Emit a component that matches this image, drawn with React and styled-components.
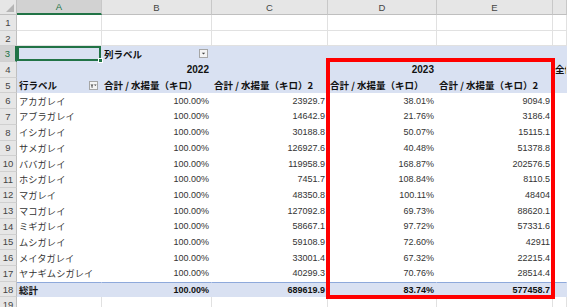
import React from "react";
import styled, { createGlobalStyle } from "styled-components";

const GlobalStyle = createGlobalStyle`
  html, body {
    margin: 0;
    padding: 0;
    background: #fff;
    overflow: hidden;
  }
`;

const GRID_LINE = "#e1e1e1";
const PIVOT_BLUE = "#d9e1f2";
const EXCEL_GREEN = "#217346";

const fish = [
  ["アカガレイ", "23929.7", "38.01%", "9094.9"],
  ["アブラガレイ", "14642.9", "21.76%", "3186.4"],
  ["イシガレイ", "30188.8", "50.07%", "15115.1"],
  ["サメガレイ", "126927.6", "40.48%", "51378.8"],
  ["ババガレイ", "119958.9", "168.87%", "202576.5"],
  ["ホシガレイ", "7451.7", "108.84%", "8110.5"],
  ["マガレイ", "48350.8", "100.11%", "48404"],
  ["マコガレイ", "127092.8", "69.73%", "88620.1"],
  ["ミギガレイ", "58667.1", "97.72%", "57331.6"],
  ["ムシガレイ", "59108.9", "72.60%", "42911"],
  ["メイタガレイ", "33001.4", "67.32%", "22215.4"],
  ["ヤナギムシガレイ", "40299.3", "70.76%", "28514.4"],
];

const Sheet = styled.div`
  position: relative;
  display: grid;
  grid-template-columns: 17px 85px 110px 116px 109px 116px 1fr;
  grid-template-rows: 15px;
  grid-auto-rows: 15.7px;
  width: 567px;
  height: 307px;
  overflow: hidden;
  font-family: "Liberation Sans", "Noto Sans CJK JP", sans-serif;
  font-size: 9px;
  color: #333;
`;

const Corner = styled.div`
  position: relative;
  background: #e6e6e6;
  border-right: 1px solid #bfbfbf;
  border-bottom: 1px solid #bfbfbf;
  box-sizing: border-box;
`;

const CornerMark = styled.svg`
  position: absolute;
  right: 2px;
  bottom: 2px;
`;

const ColHead = styled.div`
  display: flex;
  align-items: center;
  justify-content: center;
  box-sizing: border-box;
  background: ${(p) => (p.$active ? "#d2d2d2" : "#e6e6e6")};
  color: ${(p) => (p.$active ? EXCEL_GREEN : "#444")};
  border-right: 1px solid #c8c8c8;
  border-bottom: ${(p) => (p.$active ? `2px solid ${EXCEL_GREEN}` : "1px solid #bfbfbf")};
  font-size: 9.5px;
`;

const RowHead = styled.div`
  display: flex;
  align-items: center;
  justify-content: center;
  box-sizing: border-box;
  background: ${(p) => (p.$active ? "#d2d2d2" : "#e6e6e6")};
  color: ${(p) => (p.$active ? EXCEL_GREEN : "#444")};
  border-right: ${(p) => (p.$active ? `2px solid ${EXCEL_GREEN}` : "1px solid #bfbfbf")};
  border-bottom: 1px solid #d0d0d0;
  font-size: 9.5px;
`;

const tones = {
  plain: { bg: "#fff", grid: GRID_LINE },
  head: { bg: PIVOT_BLUE, grid: "transparent" },
  body: { bg: "#fff", grid: "transparent" },
  total: { bg: PIVOT_BLUE, grid: "transparent" },
};

const Cell = styled.div`
  position: relative;
  display: flex;
  align-items: center;
  justify-content: ${(p) => (p.$align === "right" ? "flex-end" : "flex-start")};
  box-sizing: border-box;
  min-width: 0;
  padding: 0 2px;
  white-space: nowrap;
  font-size: ${(p) => (p.$year ? "10px" : "9px")};
  font-weight: ${(p) => (p.$bold ? 700 : 400)};
  color: ${(p) => (p.$bold ? "#111" : "#333")};
  background: ${(p) => tones[p.$tone].bg};
  border-right: 1px solid ${(p) => tones[p.$tone].grid};
  border-bottom: 1px solid ${(p) => tones[p.$tone].grid};
  border-top: ${(p) => (p.$tone === "total" ? "1px solid #8ea9db" : "none")};
  box-shadow: ${(p) => (p.$selected ? `inset 0 0 0 2px ${EXCEL_GREEN}` : "none")};
  overflow: ${(p) => (p.$selected ? "visible" : "hidden")};

  ${(p) =>
    p.$selected &&
    `
    &::after {
      content: "";
      position: absolute;
      right: -2px;
      bottom: -2px;
      width: 5px;
      height: 5px;
      background: ${EXCEL_GREEN};
      border: 1px solid #fff;
      box-sizing: border-box;
      z-index: 2;
    }
  `}
`;

const Jp = styled.span`
  font-family: "Noto Sans CJK JP", sans-serif;
  font-size: ${(p) => (p.$small ? "9.2px" : "9.5px")};
  letter-spacing: ${(p) => (p.$small ? "0.1px" : "0")};
  color: ${(p) => (p.$bold ? "#111" : "#333")};
  font-weight: ${(p) => (p.$bold ? 700 : 400)};
`;

const FilterBox = styled.span`
  display: flex;
  align-items: center;
  justify-content: center;
  width: 9px;
  height: 9px;
  margin-left: auto;
  margin-right: 1px;
  box-sizing: border-box;
  background: #f4f4f4;
  border: 1px solid #a6a6a6;
  flex-shrink: 0;
`;

const Highlight = styled.div`
  position: absolute;
  left: 326px;
  top: 58px;
  width: 229px;
  height: 241px;
  box-sizing: border-box;
  border: 4px solid #ff0000;
  pointer-events: none;
`;

function FilterButton({ funnel }) {
  return (
    <FilterBox>
      <svg width="7" height="7" viewBox="0 0 7 7">
        {funnel ? (
          <>
            <path d="M0.5 2.5h3l-1 1.3v2.2l-1-0.6v-1.6z" fill="#444" />
            <path d="M4 2.5h2.6l-1.3 1.6z" fill="#444" />
          </>
        ) : (
          <path d="M1.8 2.8h3.4l-1.7 1.8z" fill="#444" />
        )}
      </svg>
    </FilterBox>
  );
}

function PlainRow({ n }) {
  return (
    <>
      <RowHead>{n}</RowHead>
      {[0, 1, 2, 3, 4, 5].map((i) => (
        <Cell key={i} $tone="plain" />
      ))}
    </>
  );
}

const SUM = "合計 / 水揚量（キロ）";

export default function App() {
  return (
    <>
      <GlobalStyle />
      <Sheet>
        <Corner>
          <CornerMark width="8" height="8" viewBox="0 0 8 8">
            <path d="M8 0V8H0z" fill="#b5b5b5" />
          </CornerMark>
        </Corner>
        <ColHead $active>A</ColHead>
        <ColHead>B</ColHead>
        <ColHead>C</ColHead>
        <ColHead>D</ColHead>
        <ColHead>E</ColHead>
        <ColHead />

        <PlainRow n={1} />
        <PlainRow n={2} />

        {/* pivot header */}
        <RowHead $active>3</RowHead>
        <Cell $tone="head" $selected />
        <Cell $tone="head">
          <Jp $bold>列ラベル</Jp>
          <FilterButton />
        </Cell>
        <Cell $tone="head" />
        <Cell $tone="head" />
        <Cell $tone="head" />
        <Cell $tone="head" />

        <RowHead>4</RowHead>
        <Cell $tone="head" />
        <Cell $tone="head" $align="right" $bold $year>2022</Cell>
        <Cell $tone="head" />
        <Cell $tone="head" $align="right" $bold $year>2023</Cell>
        <Cell $tone="head" />
        <Cell $tone="head">
          <Jp $bold>全体の {SUM}</Jp>
        </Cell>

        <RowHead>5</RowHead>
        <Cell $tone="head">
          <Jp $bold>行ラベル</Jp>
          <FilterButton funnel />
        </Cell>
        <Cell $tone="head">
          <Jp $bold>{SUM}</Jp>
        </Cell>
        <Cell $tone="head">
          <Jp $bold>{SUM}2</Jp>
        </Cell>
        <Cell $tone="head">
          <Jp $bold>{SUM}</Jp>
        </Cell>
        <Cell $tone="head">
          <Jp $bold>{SUM}2</Jp>
        </Cell>
        <Cell $tone="head" />

        {fish.map(([name, kg22, ratio, kg23], i) => (
          <React.Fragment key={name}>
            <RowHead>{i + 6}</RowHead>
            <Cell $tone="body">
              <Jp $small>{name}</Jp>
            </Cell>
            <Cell $tone="body" $align="right">100.00%</Cell>
            <Cell $tone="body" $align="right">{kg22}</Cell>
            <Cell $tone="body" $align="right">{ratio}</Cell>
            <Cell $tone="body" $align="right">{kg23}</Cell>
            <Cell $tone="body" />
          </React.Fragment>
        ))}

        <RowHead>18</RowHead>
        <Cell $tone="total">
          <Jp $bold>総計</Jp>
        </Cell>
        <Cell $tone="total" $align="right" $bold>100.00%</Cell>
        <Cell $tone="total" $align="right" $bold>689619.9</Cell>
        <Cell $tone="total" $align="right" $bold>83.74%</Cell>
        <Cell $tone="total" $align="right" $bold>577458.7</Cell>
        <Cell $tone="total" />

        <PlainRow n={19} />

        <Highlight />
      </Sheet>
    </>
  );
}
